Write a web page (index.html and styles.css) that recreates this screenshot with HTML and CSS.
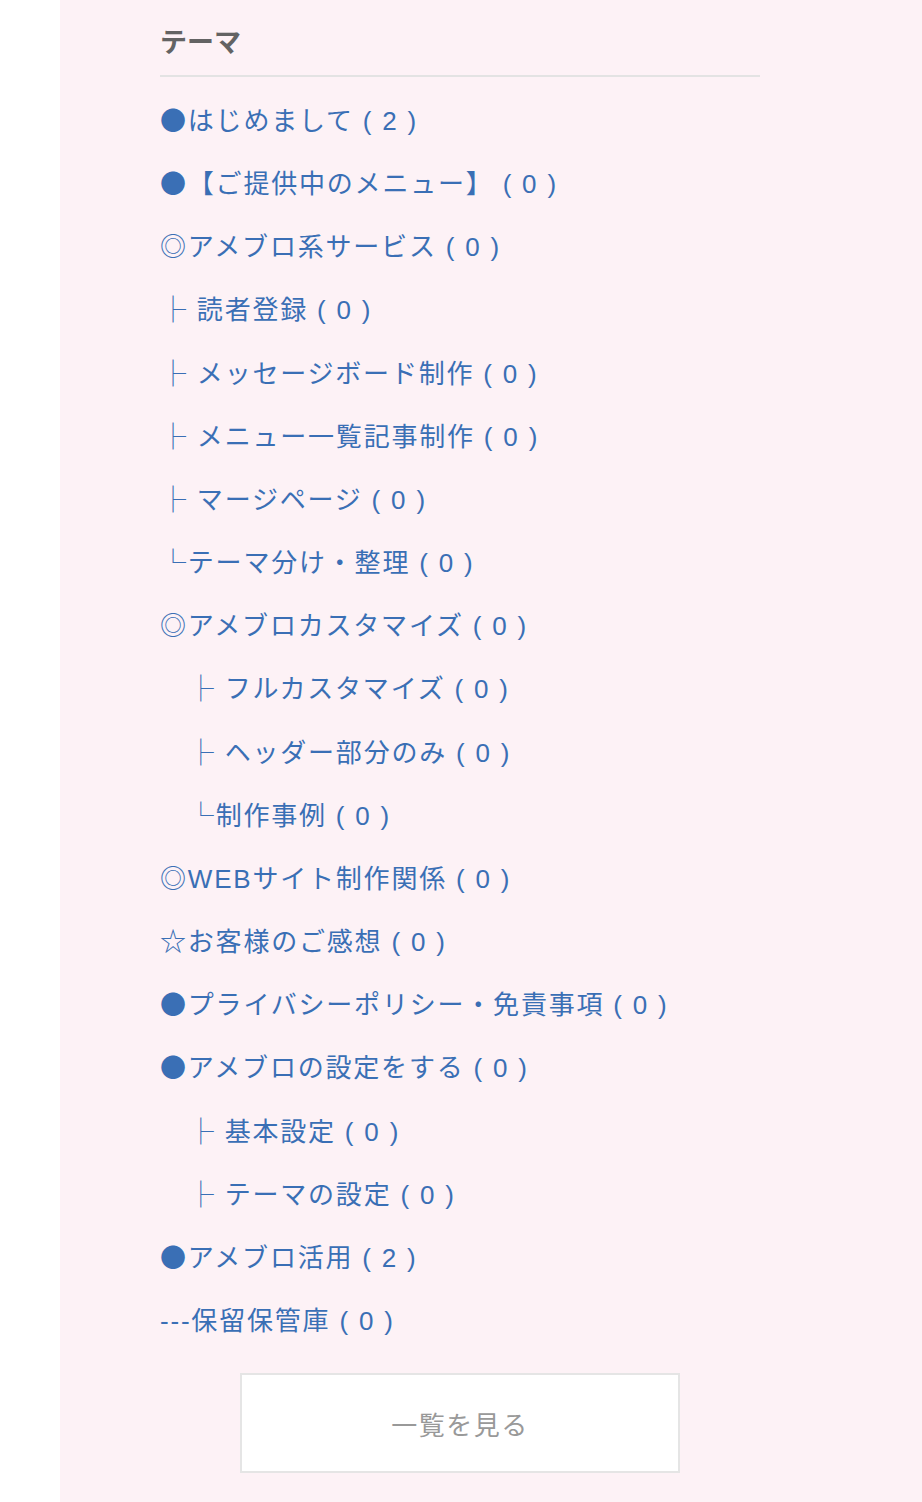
FILE: index.html
```html
<!DOCTYPE html>
<html lang="ja">
<head>
    <meta charset="UTF-8">
    <meta name="viewport" content="width=device-width, initial-scale=1.0">
    <title>テーマ</title>
    <link rel="stylesheet" href="styles.css">
</head>
<body>
    <div class="side">
        <div class="theme-box">
            <h2 class="theme-title">テーマ</h2>
            <ul class="theme-list">
                <li><a href="#"><span class="mark">●</span>はじめまして ( 2 )</a></li>
                <li><a href="#"><span class="mark">●</span>【ご提供中のメニュー】 ( 0 )</a></li>
                <li><a href="#">◎アメブロ系サービス ( 0 )</a></li>
                <li><a href="#"><span class="mark">├</span> 読者登録 ( 0 )</a></li>
                <li><a href="#"><span class="mark">├</span> メッセージボード制作 ( 0 )</a></li>
                <li><a href="#"><span class="mark">├</span> メニュー一覧記事制作 ( 0 )</a></li>
                <li><a href="#"><span class="mark">├</span> マージページ ( 0 )</a></li>
                <li><a href="#"><span class="mark">└</span>テーマ分け・整理 ( 0 )</a></li>
                <li><a href="#">◎アメブロカスタマイズ ( 0 )</a></li>
                <li><a href="#">　<span class="mark">├</span> フルカスタマイズ ( 0 )</a></li>
                <li><a href="#">　<span class="mark">├</span> ヘッダー部分のみ ( 0 )</a></li>
                <li><a href="#">　<span class="mark">└</span>制作事例 ( 0 )</a></li>
                <li><a href="#">◎WEBサイト制作関係 ( 0 )</a></li>
                <li><a href="#">☆お客様のご感想 ( 0 )</a></li>
                <li><a href="#"><span class="mark">●</span>プライバシーポリシー・免責事項 ( 0 )</a></li>
                <li><a href="#"><span class="mark">●</span>アメブロの設定をする ( 0 )</a></li>
                <li><a href="#">　<span class="mark">├</span> 基本設定 ( 0 )</a></li>
                <li><a href="#">　<span class="mark">├</span> テーマの設定 ( 0 )</a></li>
                <li><a href="#"><span class="mark">●</span>アメブロ活用 ( 2 )</a></li>
                <li><a href="#">---保留保管庫 ( 0 )</a></li>
            </ul>
            <a class="more-button" href="#">一覧を見る</a>
        </div>
    </div>
</body>
</html>
```

FILE: styles.css
```css
body {
    margin: 0;
    padding: 0;
    background: #ffffff;
    font-family: "Liberation Sans", "Noto Sans CJK JP", sans-serif;
}
.side {
    margin-left: 60px;
    min-height: 1502px;
    box-sizing: border-box;
    padding: 19px 0 29px 100px;
    background: #fdf2f6;
}
.theme-box {
    width: 600px;
}
.theme-title {
    margin: 0;
    padding-bottom: 8px;
    font-size: 27px;
    line-height: 48px;
    font-weight: bold;
    color: #636363;
    border-bottom: 2px solid #e3e3e3;
}
.theme-list {
    list-style: none;
    margin: 13px 0 0;
    padding: 0;
}
.theme-list li {
    height: 63.16px;
    font-size: 26px;
    line-height: 63.16px;
    letter-spacing: 1.8px;
    white-space: nowrap;
}
.theme-list a {
    color: #3a6fb5;
    text-decoration: none;
}
.mark {
    font-family: "Noto Sans CJK JP", sans-serif;
    line-height: 0;
}
.more-button {
    display: block;
    width: 440px;
    height: 100px;
    box-sizing: border-box;
    margin: 20px auto 0;
    padding-top: 6px;
    background: #ffffff;
    border: 2px solid #e5e5e5;
    color: #999999;
    font-size: 26px;
    line-height: 90px;
    letter-spacing: 1.5px;
    text-align: center;
    text-decoration: none;
}
```
